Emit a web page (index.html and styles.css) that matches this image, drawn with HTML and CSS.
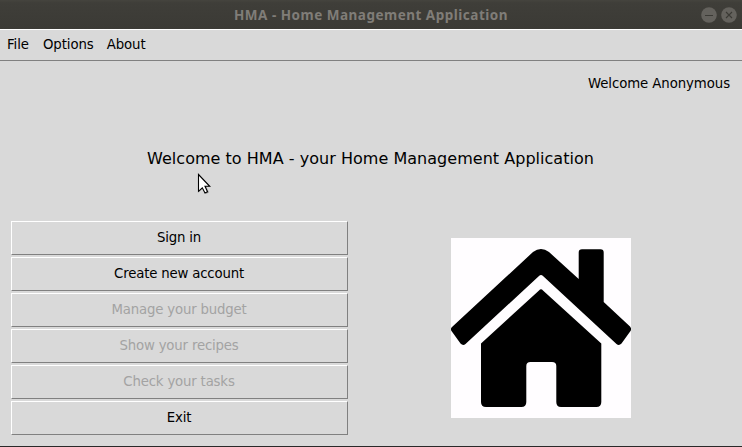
FILE: index.html
```html
<!DOCTYPE html>
<html lang="en">
<head>
<meta charset="utf-8">
<title>HMA - Home Management Application</title>
<link rel="stylesheet" href="styles.css">
</head>
<body>
<div class="window">
  <header class="titlebar">
    <h1 class="title">HMA - Home Management Application</h1>
    <div class="controls">
      <svg width="16" height="16" viewBox="0 0 16 16"><circle cx="8" cy="8" r="7.8" fill="#64625d"/><path d="M4 8.5h8" stroke="#3b3a35"/></svg>
      <svg width="16" height="16" viewBox="0 0 16 16"><circle cx="8" cy="8" r="7.8" fill="#64625d"/><path d="M5 5l6 6M11 5l-6 6" stroke="#3b3a35" stroke-width="1.1"/></svg>
    </div>
  </header>
  <nav class="menu"><span class="first">File</span><span>Options</span><span>About</span></nav>
  <p class="user">Welcome Anonymous</p>
  <h2 class="heading">Welcome to HMA - your Home Management Application</h2>
  <main class="content">
    <div class="actions">
      <button>Sign in</button>
      <button>Create new account</button>
      <button disabled>Manage your budget</button>
      <button disabled>Show your recipes</button>
      <button disabled>Check your tasks</button>
      <button>Exit</button>
    </div>
    <svg class="house" width="180" height="180" viewBox="0 0 180 180">
      <path d="M1 89L82 14Q90 8 98 14L127.700 41V14.500Q127.700 11.300 131 11.300H149.500Q152.700 11.300 152.700 14.500V64L179 88.500Q181 91 179.500 93L170.500 105.500Q168 108 165.500 106L92 38Q90 36 88 38L14.500 106Q12 108 9.500 105.500L.5 93Q-1 91 1 89Z"/>
      <path d="M30 105.500L88 52.500Q90 50 92 52.500L150.300 105.500V164Q150.300 169 145.300 169H110Q105.300 169 105.300 164V128Q105.300 124 101 124H79.500Q75.300 124 75.300 128V164Q75.300 169 70.300 169H35Q30 169 30 164Z"/>
    </svg>
  </main>
  <svg class="cursor" width="16" height="23" viewBox="0 0 16 23">
    <path class="shadow" d="M2 2V19L6 15.500L9 21L12 19.500L9.500 14H14Z"/>
    <path d="M1.500 1.500V18.300L5.300 14.800L8 20L10.500 18.700L8 13.300H12.700Z" fill="#fff" stroke="#000" stroke-width="1.100"/>
  </svg>
</div>
</body>
</html>
```
FILE: styles.css
```css
* { box-sizing: border-box; }
body { margin: 0; background: #292929; }
.window {
  position: relative;
  display: flex;
  flex-direction: column;
  width: 742px;
  height: 446px;
  background: #d9d9d9;
  color: #000;
  font: 13.3px/16px "DejaVu Sans", sans-serif;
  letter-spacing: -.08px;
}
.titlebar {
  display: grid;
  grid-template-columns: 42px 1fr 42px;
  align-items: center;
  height: 29px;
  background: linear-gradient(#45443e, #3f3e39 10%, #3b3a35);
}
.title {
  grid-column: 2;
  margin: 0;
  text-align: center;
  color: #807d78;
  font: bold 13.5px/28px "Noto Sans", sans-serif;
  letter-spacing: .5px;
}
.controls { display: flex; gap: 4px; padding-left: 1px; }
.controls svg { display: block; flex: none; }
.menu {
  display: flex;
  gap: 13px;
  height: 32px;
  padding: 7px 7px 0;
  border-top: 1px solid #fff;
  border-bottom: 1px solid #808080;
}
.menu .first { margin-right: 1px; }
.user { margin: 15px 12px 0 0; text-align: right; }
.heading {
  margin: 57px 0 0;
  padding-right: 1px;
  text-align: center;
  font: 16px/20px "DejaVu Sans", sans-serif;
  letter-spacing: .03px;
}
.content { display: flex; margin-top: 52px; padding-left: 11px; }
.actions { display: flex; flex-direction: column; gap: 2px; width: 337px; }
.actions button {
  height: 34px;
  margin: 0;
  padding: 0 1px 1px 0;
  border: 1px solid;
  border-color: #fff #808080 #808080 #fff;
  background: #d9d9d9;
  color: #000;
  font: inherit;
  letter-spacing: -.18px;
}
.actions button:disabled { color: #a3a3a3; }
.house { display: block; margin: 17px 0 0 103px; background: #fffdff; }
.cursor { position: absolute; left: 197px; top: 173px; }
.cursor .shadow { fill: #000; opacity: .25; filter: blur(.7px); }
```
